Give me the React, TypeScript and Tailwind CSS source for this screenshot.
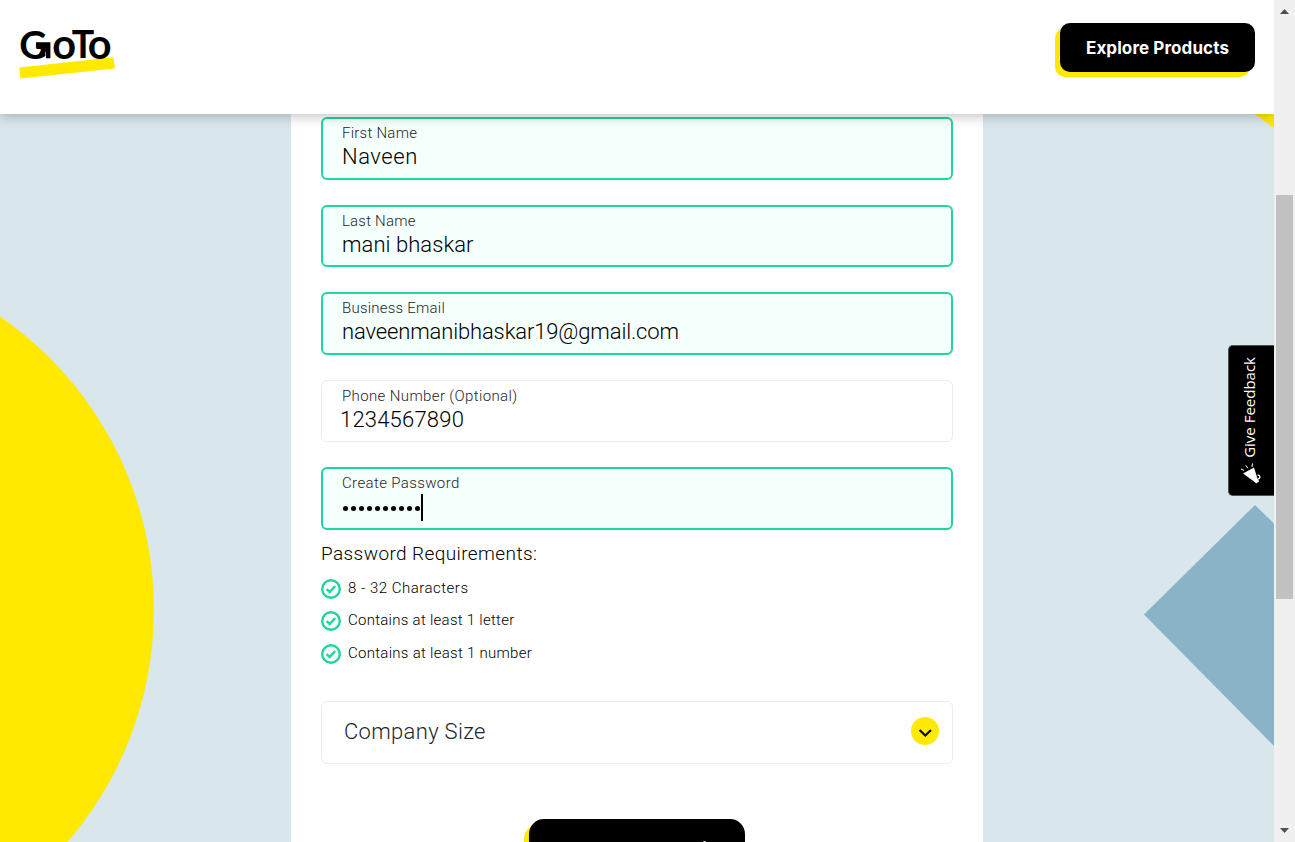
import React from "react";

type FieldProps = { label: string; valid?: boolean; children: React.ReactNode; labelClass: string };

function Field({ label, valid, children, labelClass }: FieldProps) {
  return (
    <div
      className={
        valid
          ? "flex h-[62.5px] flex-col rounded-md border-2 border-[#1ed6a0] bg-[#f5fffc] pl-[19px] pt-1"
          : "flex h-[62.5px] flex-col rounded-md border border-[#ececec] bg-white pl-5 pt-[5px]"
      }
    >
      <label className={`h-5 text-[15px] leading-5 text-[#1f2529] ${labelClass}`}>{label}</label>
      {children}
    </div>
  );
}

function Requirement({ text, spacing }: { text: string; spacing: string }) {
  return (
    <li className="flex h-[32.5px] items-start gap-[7px]">
      <svg width="20" height="20" viewBox="0 0 20 20" fill="none" stroke="#1ed6a0" className="mt-0.5 shrink-0">
        <circle cx="10" cy="10" r="8.8" strokeWidth="2.4" />
        <path d="M5.6 10.1 8.7 13 14.2 7" strokeWidth="2.4" />
      </svg>
      <span className={`text-[15px] leading-[22px] ${spacing}`}>{text}</span>
    </li>
  );
}

function Logo() {
  return (
    <svg width="97" height="52" viewBox="19 28 97 52" className="ml-[19px] mt-7 block font-['Lato'] font-bold" aria-label="GoTo">
      <path d="M19.3 67.6 113.4 57.3 115 68.4 20.4 78.6Z" fill="#ffe900" />
      <text fill="#000">
        <tspan x="19.3" y="58.6" fontSize="38.5">G</tspan>
        <tspan x="52.3" y="58.8" fontSize="41.5">o</tspan>
        <tspan x="71.8" y="58.2" fontSize="37.5">T</tspan>
        <tspan x="87.8" y="58.8" fontSize="41.5">o</tspan>
      </text>
      <path d="M36 42.2H50.4V58.2H46V51.5L41.5 57.3 37.8 55.3 43.8 46.8H36Z" fill="#000" />
    </svg>
  );
}

export default function App() {
  return (
    <div className="flex h-[842px] w-[1295px] overflow-hidden bg-[#d9e6ec] font-['Roboto',sans-serif] font-light text-black">
      <div className="relative flex w-[1274px] flex-col overflow-hidden">
        <svg className="absolute inset-0" width="1274" height="842" viewBox="0 0 1274 842">
          <circle cx="-201.7" cy="609.5" r="355.7" fill="#ffe900" />
          <path d="M1255 505 1144 614.5 1274 746V523.5Z" fill="#8bb3c8" />
          <path d="M1254 113.5H1274V128Z" fill="#ffe900" />
        </svg>

        <header className="relative z-10 flex h-[114px] shrink-0 items-start justify-between bg-white pr-[19px] shadow-[0_2px_12px_rgba(0,0,0,0.25)]">
          <Logo />
          <button className="mt-[23px] h-[49px] w-[195px] rounded-[10px] bg-black pt-0.5 font-['Inter'] text-[17px] font-bold tracking-[0.1px] text-white shadow-[-5px_5px_0_#ffe900]">
            Explore Products
          </button>
        </header>

        <main className="relative ml-[291px] flex h-[728px] w-[692px] flex-col overflow-hidden bg-white px-[30px] pt-[3px]">
          <div className="flex flex-col gap-[25px]">
            <Field label="First Name" valid labelClass="tracking-[0.25px]">
              <span className="text-[22px] leading-[28px] tracking-[0.55px]">Naveen</span>
            </Field>
            <Field label="Last Name" valid labelClass="tracking-[0.2px]">
              <span className="text-[22px] leading-[28px] tracking-[0.05px]">mani bhaskar</span>
            </Field>
            <Field label="Business Email" valid labelClass="tracking-[0.22px]">
              <span className="text-[22px] leading-[28px] tracking-[-0.14px]">naveenmanibhaskar19@gmail.com</span>
            </Field>
            <Field label="Phone Number (Optional)" labelClass="tracking-[0.37px]">
              <span className="-ml-0.5 text-[22px] leading-[28px] tracking-[0.2px]">1234567890</span>
            </Field>
            <Field label="Create Password" valid labelClass="tracking-[0.37px]">
              <div className="mt-px flex h-[27px] items-center gap-[3px] pl-px">
                {Array.from({ length: 10 }, (_, i) => (
                  <span key={i} className="relative top-px size-[5px] rounded-full bg-black" />
                ))}
                <span className="-ml-[2px] h-[27px] w-0.5 bg-black" />
              </div>
            </Field>
          </div>

          <h2 className="mt-3 h-6 text-[19px] font-light leading-6 tracking-[0.4px]">Password Requirements:</h2>
          <ul className="mt-[11px] flex flex-col">
            <Requirement text="8 - 32 Characters" spacing="tracking-[0.5px]" />
            <Requirement text="Contains at least 1 letter" spacing="tracking-[0.27px]" />
            <Requirement text="Contains at least 1 number" spacing="tracking-[0.28px]" />
          </ul>

          <div className="mt-[26.5px] flex h-[63px] shrink-0 items-center justify-between rounded-md border border-[#ececec] pl-[22px] pr-[13px]">
            <span className="text-[22px] leading-7 tracking-[0.32px] text-[#1f2529]">Company Size</span>
            <svg width="28" height="28" viewBox="0 0 28 28" fill="none" className="-mt-0.5">
              <circle cx="14" cy="14" r="14" fill="#ffe900" />
              <path d="M8.6 13 14.3 18.5 20 13" stroke="#000" strokeWidth="2.1" />
            </svg>
          </div>

          <button className="ml-[208px] mt-[55px] flex h-[60px] w-[216px] shrink-0 items-start rounded-[15px] bg-black pl-[174px] pt-[22px] shadow-[-5px_5px_0_#ffe900]">
            <span className="h-1 w-[3px] rounded-full bg-white" />
          </button>
        </main>

        <button className="absolute left-[1228px] top-[345px] z-20 flex h-[151px] w-[46px] flex-col items-center rounded-l-[5px] border border-r-0 border-[#4a5358] bg-black pr-1 pt-[11px] text-white">
          <span className="mr-0.5 rotate-180 font-['Open_Sans'] text-[15px] font-normal leading-5 [writing-mode:vertical-rl]">
            Give Feedback
          </span>
          <svg width="22" height="24" viewBox="0 0 22 24" className="ml-0.5 mt-1" fill="none" stroke="#fff">
            <path d="M3 11.6 14 5.4 17.4 16.6 19.2 19.2 16.2 21.6 13.4 19Z" fill="#fff" stroke="none" />
            <path d="M17.4 13.2c3-.7 3.4 3.4.4 3.8" strokeWidth="1.3" />
            <path d="M1 7 4 8.4M5.6 3.2 8 6.2M12.4 1.4 12 5" strokeWidth="1" />
          </svg>
        </button>
      </div>

      <aside className="flex w-[21px] flex-col items-center bg-[#f0f0f0]">
        <svg width="9" height="5" viewBox="0 0 9 5" className="mt-[9px]">
          <path d="M0 5 4.5 0 9 5Z" fill="#505050" />
        </svg>
        <div className="mt-[181px] h-[404px] w-[17px] bg-[#c1c1c1]" />
        <svg width="9" height="5" viewBox="0 0 9 5" className="mb-[9px] mt-auto">
          <path d="M0 0 4.5 5 9 0Z" fill="#505050" />
        </svg>
      </aside>
    </div>
  );
}
